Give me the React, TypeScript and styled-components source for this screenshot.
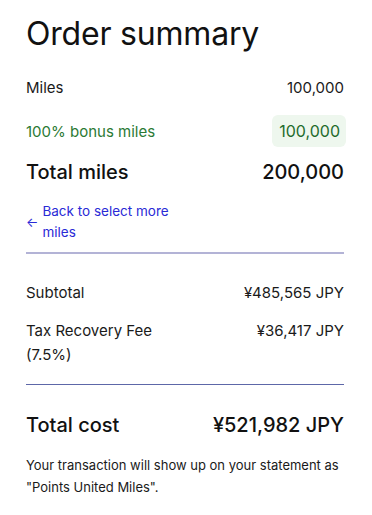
import styled, { createGlobalStyle } from "styled-components";

const GlobalStyle = createGlobalStyle`
  body {
    margin: 0;
    background: #ffffff;
    font-family: Inter, "Noto Sans", sans-serif;
    color: #1a1a1a;
  }
`;

function App() {
  return (
    <>
      <GlobalStyle />
      <Container>
        <Title>Order summary</Title>

        <Row>
          <Label>Miles</Label>
          <Value>100,000</Value>
        </Row>
        <BonusRow>
          <Label $green>100% bonus miles</Label>
          <BonusPill>100,000</BonusPill>
        </BonusRow>
        <TotalRow>
          <span>Total miles</span>
          <span>200,000</span>
        </TotalRow>

        <BackLink href="#">
          <Arrow>←</Arrow>
          <span>Back to select more miles</span>
        </BackLink>
        <Divider $color="#b3b3d6" $size={2} />

        <CostBlock>
          <Row>
            <Label>Subtotal</Label>
            <Value>¥485,565 JPY</Value>
          </Row>
          <FeeRow>
            <FeeLabel>Tax Recovery Fee (7.5%)</FeeLabel>
            <Value>¥36,417 JPY</Value>
          </FeeRow>
        </CostBlock>
        <Divider $color="#5d67a8" $size={1} />

        <GrandRow>
          <span>Total cost</span>
          <span>¥521,982 JPY</span>
        </GrandRow>
        <Note>
          Your transaction will show up on your statement as "Points United
          Miles".
        </Note>
      </Container>
    </>
  );
}

export default App;

const Container = styled.div`
  padding: 12px 28px 20px 26px;
  display: flex;
  flex-direction: column;
`;

const Title = styled.h1`
  margin: 0 0 20px;
  font-size: 32px;
  font-weight: 400;
  line-height: 44px;
  letter-spacing: -0.2px;
  color: #111;
`;

const Row = styled.div`
  display: flex;
  justify-content: space-between;
  align-items: flex-start;
  font-size: 15px;
  line-height: 23px;
  margin-bottom: 16px;
`;

const Label = styled.span<{ $green?: boolean }>`
  color: ${(p) => (p.$green ? "#2b7a34" : "#1a1a1a")};
`;

const Value = styled.span`
  color: #1a1a1a;
  white-space: nowrap;
`;

const BonusRow = styled(Row)`
  align-items: center;
  margin-bottom: 12px;
`;

const BonusPill = styled.span`
  background: #eef7ee;
  color: #236b2c;
  font-size: 16px;
  border-radius: 6px;
  padding: 6px 6px 6px 7px;
  line-height: 20px;
  margin-right: -2px;
`;

const TotalRow = styled.div`
  display: flex;
  justify-content: space-between;
  font-size: 20px;
  font-weight: 500;
  line-height: 26px;
  color: #111;
  margin-bottom: 16px;
`;

const BackLink = styled.a`
  display: flex;
  align-items: center;
  gap: 4px;
  width: 150px;
  color: #2a2ad6;
  text-decoration: none;
  font-size: 13.5px;
  line-height: 21px;
  margin-bottom: 9px;
`;

const Arrow = styled.span`
  font-size: 13px;
  line-height: 1;
`;

const Divider = styled.hr<{ $color: string; $size: number }>`
  margin: 0;
  border: none;
  height: ${(p) => p.$size}px;
  background: ${(p) => p.$color};
`;

const CostBlock = styled.div`
  padding-top: 27px;
  padding-bottom: 3px;
`;

const FeeRow = styled(Row)`
  line-height: 24px;
  margin-top: -1px;
  margin-bottom: 14px;
`;

const FeeLabel = styled.span`
  max-width: 160px;
`;

const GrandRow = styled.div`
  display: flex;
  justify-content: space-between;
  font-size: 20px;
  font-weight: 500;
  line-height: 26px;
  color: #111;
  margin-top: 27px;
  margin-bottom: 16px;
`;

const Note = styled.p`
  margin: 0;
  font-size: 13px;
  line-height: 22px;
  color: #1a1a1a;
`;
